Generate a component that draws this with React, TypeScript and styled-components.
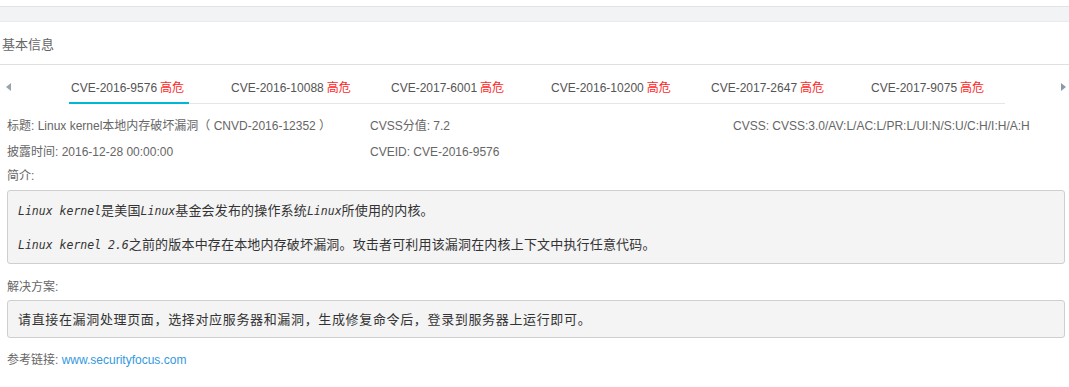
import React, { useState } from 'react';
import styled, { createGlobalStyle } from 'styled-components';

const GlobalStyle = createGlobalStyle`
  html, body {
    margin: 0;
    padding: 0;
    background: #fff;
  }
  body {
    font-family: "Liberation Sans", Arial, "Noto Sans CJK SC", sans-serif;
    font-size: 12px;
    color: #666;
  }
`;

const vulns = [
  { id: 'CVE-2016-9576', level: '高危' },
  { id: 'CVE-2016-10088', level: '高危' },
  { id: 'CVE-2017-6001', level: '高危' },
  { id: 'CVE-2016-10200', level: '高危' },
  { id: 'CVE-2017-2647', level: '高危' },
  { id: 'CVE-2017-9075', level: '高危' },
];

const Page = styled.div`
  width: 1069px;
  padding-top: 6px;
`;

const TopBar = styled.div`
  height: 14px;
  background: #f2f3f5;
  border-top: 1px solid #e2e3e5;
  border-bottom: 1px solid #e9eaec;
`;

const Header = styled.div`
  height: 42px;
  display: flex;
  align-items: center;
  padding-left: 2px;
  font-size: 13px;
  color: #666;
  border-bottom: 1px solid #e0e0e0;
`;

const TabRow = styled.div`
  display: flex;
  align-items: stretch;
  height: 39px;
`;

const Arrow = styled.button<{ $side: 'left' | 'right' }>`
  flex: ${(p) => (p.$side === 'left' ? '0 0 69px' : '1')};
  display: flex;
  align-items: center;
  justify-content: ${(p) => (p.$side === 'left' ? 'flex-start' : 'flex-end')};
  padding: ${(p) => (p.$side === 'left' ? '5px 0 0 6px' : '5px 3px 0 0')};
  border: none;
  background: transparent;
  cursor: pointer;
`;

const Tabs = styled.div`
  width: 936px;
  display: flex;
  gap: 40px;
  border-bottom: 1px solid #e6e6e6;
`;

const Tab = styled.div<{ $active: boolean }>`
  width: 120px;
  display: flex;
  align-items: flex-end;
  justify-content: flex-start;
  padding: 0 0 7px 2px;
  box-sizing: border-box;
  line-height: 14px;
  white-space: nowrap;
  font-size: 12px;
  color: #555;
  cursor: pointer;
  margin-bottom: -1px;
  border-bottom: 2px solid ${(p) => (p.$active ? '#00b7d4' : 'transparent')};
`;

const Level = styled.span`
  color: #ff1f1f;
  margin-left: 3px;
`;

const Body = styled.div`
  padding: 12px 4px 0 7px;
`;

const InfoGrid = styled.div`
  display: grid;
  grid-template-columns: 363px 363px 1fr;
  row-gap: 6px;
  margin-bottom: 4px;
`;

const Line = styled.div`
  line-height: 20px;
  white-space: nowrap;
  color: #666;
`;

const Label = styled.div<{ $top?: number; $bottom?: number }>`
  line-height: 20px;
  color: #666;
  margin-top: ${(p) => p.$top ?? 0}px;
  margin-bottom: ${(p) => p.$bottom ?? 4}px;
`;

const Box = styled.div`
  background: #f4f4f4;
  border: 1px solid #cfcfcf;
  border-radius: 3px;
`;

const Pre = styled.pre`
  margin: 0;
  padding: 10px 10px 11px;
  font-family: "Noto Sans CJK SC", sans-serif;
  font-size: 13px;
  letter-spacing: 0.17px;
  line-height: 17px;
  color: #333;
  white-space: pre-wrap;
`;

const Code = styled.em`
  font-style: italic;
  font-family: "DejaVu Sans Mono", monospace;
  font-size: 11.5px;
  line-height: 11px;
  letter-spacing: 0;
  color: #333;
`;

const Solution = styled.div`
  padding: 10px 10px;
  font-family: "Noto Sans CJK SC", sans-serif;
  font-size: 13px;
  letter-spacing: 0.65px;
  line-height: 16px;
  color: #333;
`;

const Link = styled.a`
  color: #3399e0;
  text-decoration: none;
`;

const Triangle = ({ dir }: { dir: 'left' | 'right' }) => (
  <svg width="5" height="8" viewBox="0 0 5 8">
    {dir === 'left' ? (
      <path d="M5 0 L0 4 L5 8 Z" fill="#9aa3ad" />
    ) : (
      <path d="M0 0 L5 4 L0 8 Z" fill="#8c99a8" />
    )}
  </svg>
);

export default function App() {
  const [active, setActive] = useState(0);

  return (
    <Page>
      <GlobalStyle />
      <TopBar />
      <Header>基本信息</Header>
      <TabRow>
        <Arrow $side="left" aria-label="prev">
          <Triangle dir="left" />
        </Arrow>
        <Tabs>
          {vulns.map((v, i) => (
            <Tab key={v.id} $active={i === active} onClick={() => setActive(i)}>
              {v.id}
              <Level>{v.level}</Level>
            </Tab>
          ))}
        </Tabs>
        <Arrow $side="right" aria-label="next">
          <Triangle dir="right" />
        </Arrow>
      </TabRow>
      <Body>
        <InfoGrid>
          <Line>标题: Linux kernel本地内存破坏漏洞（ CNVD-2016-12352 ）</Line>
          <Line>CVSS分值: 7.2</Line>
          <Line>CVSS: CVSS:3.0/AV:L/AC:L/PR:L/UI:N/S:U/C:H/I:H/A:H</Line>
          <Line>披露时间: 2016-12-28 00:00:00</Line>
          <Line>CVEID: CVE-2016-9576</Line>
        </InfoGrid>
        <Label>简介:</Label>
        <Box>
          <Pre>
            <Code>Linux kernel</Code>是美国<Code>Linux</Code>基金会发布的操作系统<Code>Linux</Code>所使用的内核。
            {'\n\n'}
            <Code>Linux kernel 2.6</Code>之前的版本中存在本地内存破坏漏洞。攻击者可利用该漏洞在内核上下文中执行任意代码。
          </Pre>
        </Box>
        <Label $top={13} $bottom={3}>解决方案:</Label>
        <Box>
          <Solution>请直接在漏洞处理页面，选择对应服务器和漏洞，生成修复命令后，登录到服务器上运行即可。</Solution>
        </Box>
        <Label $top={12}>
          参考链接: <Link href="#">www.securityfocus.com</Link>
        </Label>
      </Body>
    </Page>
  );
}
